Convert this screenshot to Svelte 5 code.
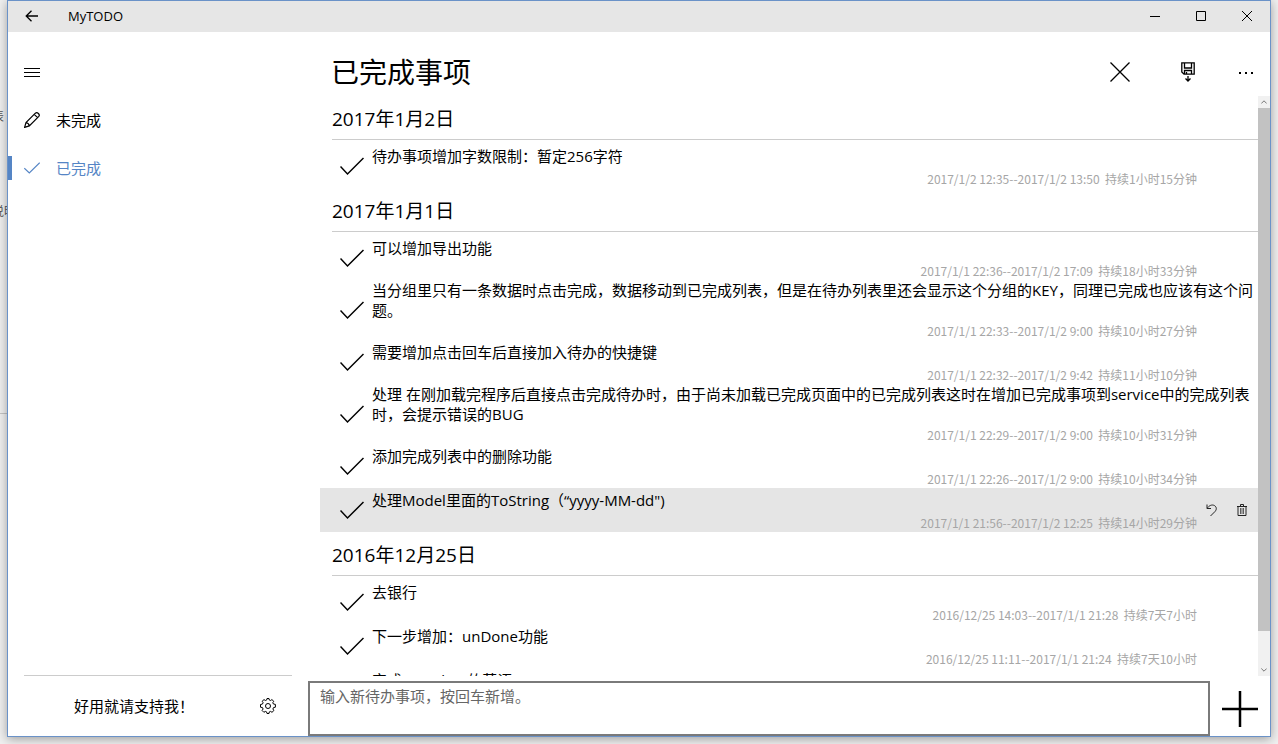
<script>
  let draft = $state('')
  let page = $state('done')

  const pages = [
    { id: 'todo', label: '未完成' },
    { id: 'done', label: '已完成' }
  ]

  // finished items, grouped by the day they were created
  let groups = $state([
    {
      day: '2017年1月2日',
      items: [
        { text: '待办事项增加字数限制：暂定256字符', span: '2017/1/2 12:35--2017/1/2 13:50', lasted: '持续1小时15分钟' }
      ]
    },
    {
      day: '2017年1月1日',
      items: [
        { text: '可以增加导出功能', span: '2017/1/1 22:36--2017/1/2 17:09', lasted: '持续18小时33分钟' },
        { text: '当分组里只有一条数据时点击完成，数据移动到已完成列表，但是在待办列表里还会显示这个分组的KEY，同理已完成也应该有这个问题。', span: '2017/1/1 22:33--2017/1/2 9:00', lasted: '持续10小时27分钟' },
        { text: '需要增加点击回车后直接加入待办的快捷键', span: '2017/1/1 22:32--2017/1/2 9:42', lasted: '持续11小时10分钟' },
        { text: '处理 在刚加载完程序后直接点击完成待办时，由于尚未加载已完成页面中的已完成列表这时在增加已完成事项到service中的完成列表时，会提示错误的BUG', span: '2017/1/1 22:29--2017/1/2 9:00', lasted: '持续10小时31分钟' },
        { text: '添加完成列表中的删除功能', span: '2017/1/1 22:26--2017/1/2 9:00', lasted: '持续10小时34分钟' },
        { text: '处理Model里面的ToString（“yyyy-MM-dd")', span: '2017/1/1 21:56--2017/1/2 12:25', lasted: '持续14小时29分钟', active: true }
      ]
    },
    {
      day: '2016年12月25日',
      items: [
        { text: '去银行', span: '2016/12/25 14:03--2017/1/1 21:28', lasted: '持续7天7小时' },
        { text: '下一步增加：unDone功能', span: '2016/12/25 11:11--2017/1/1 21:24', lasted: '持续7天10小时' },
        { text: '完成complete的英语', span: '2016/12/25 11:10--2017/1/1 21:20', lasted: '持续7天10小时' }
      ]
    }
  ])

  function removeItem(group, item) {
    group.items = group.items.filter(i => i !== item)
  }
</script>

<div class="desktop">
  <div class="behind" aria-hidden="true">
    <span class="scrap first">表</span>
    <span class="scrap second">说明</span>
    <span class="rule"></span>
  </div>

  <div class="window">
    <header class="titlebar">
      <button class="back" aria-label="返回">
        <svg width="14" height="12" viewBox="0 0 14 12"><path d="M6.5 .7L1.2 6l5.3 5.3M1.2 6H13" stroke-width="1.3" /></svg>
      </button>
      <span class="app-name">MyTODO</span>
      <button class="sys" aria-label="最小化">
        <svg width="10" height="10" viewBox="0 0 10 10"><path d="M0 5.5h10" /></svg>
      </button>
      <button class="sys" aria-label="最大化">
        <svg width="10" height="10" viewBox="0 0 10 10"><path d="M.5 .5h9v9h-9z" /></svg>
      </button>
      <button class="sys" aria-label="关闭">
        <svg width="10" height="10" viewBox="0 0 10 10"><path d="M0 0l10 10M10 0L0 10" /></svg>
      </button>
    </header>

    <div class="body">
      <nav class="pane">
        <button class="nav-item" aria-label="菜单">
          <svg width="16" height="16" viewBox="0 0 16 16"><path d="M0 4.5h16M0 8.5h16M0 12.5h16" /></svg>
        </button>
        {#each pages as p (p.id)}
          <button class="nav-item" class:selected={page === p.id} onclick={() => page = p.id}>
            {#if p.id === 'todo'}
              <svg width="16" height="16" viewBox="0 0 16 16"><path d="M.6 15.4L2 10.6 11.4 1.2C13.2-.4 16.4 2.4 14.8 4.4L5.3 13.9zM2 10.6C3.6 10.8 5 12.2 5.3 13.9M10.2 2.400L13.600 5.600" stroke-width="1.2" /></svg>
            {:else}
              <svg width="16" height="16" viewBox="0 0 16 16"><path d="M.3 8.300L5.300 13 15.700 2.700" stroke-width="1.2" /></svg>
            {/if}
            <span>{p.label}</span>
          </button>
        {/each}
        <div class="pane-footer">
          <button class="support">好用就请支持我！</button>
          <button class="settings" aria-label="设置">
            <svg width="16" height="16" viewBox="0 0 16 16">
              <path d="M6.700 2L7 .5h2l.3 1.500 1.300.500L11.900 1.600l1.900 1.700-1 1.400.6 1.300 2 .4v2.800l-1.900.4-.6 1.400 1 1.500-1.900 1.800-1.500-.9-1.200.5L9 15.500H7l-.4-1.600-1.300-.5-1.400.9-1.800-1.800 1-1.500L2.500 9.600.5 9.200V6.500l1.900-.4.700-1.400-1-1.400L4 1.600l1.400.900z" />
              <circle cx="8" cy="8" r="2.500" />
            </svg>
          </button>
        </div>
      </nav>

      <main>
        <div class="head">
          <h1>已完成事项</h1>
          <button class="tool" aria-label="清空">
            <svg width="20" height="20" viewBox="0 0 20 20"><path d="M.5 .5l19 19M19.500 .5L.5 19.500" stroke-width="1.3" /></svg>
          </button>
          <button class="tool" aria-label="导出">
            <svg width="14" height="20" viewBox="0 0 14 20">
              <path d="M.8 .8h12.400v11.400H3L.8 10zM3.500 1v5h7V1M3.500 12V8.500h7V12M5.500 10v2" stroke-width="1.300" />
              <path d="M7 14v5M4.500 16.500L7 19l2.500-2.500" stroke-width="1.300" />
            </svg>
          </button>
          <button class="tool more" aria-label="更多">
            <svg width="16" height="4" viewBox="0 0 16 4"><path d="M1 3h2M7 3h2M13 3h2" stroke-width="2" /></svg>
          </button>
        </div>

        <div class="scroller">
          <div class="list">
            {#each groups as group (group.day)}
              <section>
                <h2>{group.day}</h2>
                <ul>
                  {#each group.items as item (item.text)}
                    <li class:active={item.active}>
                      <svg class="check" width="24" height="24" viewBox="0 0 24 24"><path d="M.5 12.500L7.500 20 23.500 4" stroke-width="1.500" /></svg>
                      <p class="text">{item.text}</p>
                      <p class="time">{item.span}&nbsp; {item.lasted}</p>
                      {#if item.active}
                        <div class="actions">
                          <button aria-label="撤销">
                            <svg width="12" height="12" viewBox="0 0 12 12"><path d="M1 .5V4.500H5M1.200 4.300C3 1.500 6 .2 8.500 1.600 11 3.200 10.600 5.800 9 7.500L4.500 12" /></svg>
                          </button>
                          <button aria-label="删除" onclick={() => removeItem(group, item)}>
                            <svg width="12" height="12" viewBox="0 0 12 12"><path d="M1 2.500h10M4.500 2V.5h3V2M2 2.500v9h8v-9" /><path d="M4.500 4v6M6 4v6M7.500 4v6" stroke-width=".7" /></svg>
                          </button>
                        </div>
                      {/if}
                    </li>
                  {/each}
                </ul>
              </section>
            {/each}
          </div>
          <div class="scrollbar">
            <button aria-label="向上滚动">
              <svg width="6" height="4" viewBox="0 0 6 4"><path d="M.3 3.500L3 .8l2.700 2.700" /></svg>
            </button>
            <div class="track"><div class="thumb"></div></div>
            <button aria-label="向下滚动">
              <svg width="6" height="4" viewBox="0 0 6 4"><path d="M.3 .5L3 3.200 5.700 .5" /></svg>
            </button>
          </div>
        </div>

        <form class="entry" onsubmit={e => e.preventDefault()}>
          <textarea aria-label="新待办事项" placeholder="输入新待办事项，按回车新增。" bind:value={draft}></textarea>
          <button aria-label="新增">
            <svg width="36" height="36" viewBox="0 0 36 36"><path d="M18 0v36M0 18h36" stroke-width="2.500" /></svg>
          </button>
        </form>
      </main>
    </div>
  </div>
</div>

<style>
  :global(body) {
    margin: 0;
  }
  .desktop {
    position: relative;
    box-sizing: border-box;
    height: 100vh;
    padding: 0 7px 7px;
    background: #f0f0f0;
    color: #000;
    font: 15px/20px "Open Sans", "Noto Sans CJK SC", sans-serif;
    overflow: hidden;
  }
  button {
    display: flex;
    align-items: center;
    justify-content: center;
    padding: 0;
    border: none;
    background: none;
    color: inherit;
    font: inherit;
  }
  svg {
    display: block;
    flex: none;
    fill: none;
    stroke: currentColor;
  }
  h1, h2, p, ul {
    margin: 0;
    padding: 0;
    font-weight: 400;
  }

  /* the other window that peeks out on the left */
  .behind {
    position: absolute;
    inset: 0 auto 0 0;
    width: 7px;
    overflow: hidden;
    color: #555;
    font-size: 12px;
  }
  .scrap {
    position: absolute;
    white-space: nowrap;
  }
  .first {
    top: 107px;
    left: -8px;
  }
  .second {
    top: 202px;
    left: -8px;
  }
  .rule {
    position: absolute;
    top: 413px;
    width: 100%;
    border-top: 1px solid #c4c4c4;
  }

  .window {
    position: relative;
    display: flex;
    flex-direction: column;
    box-sizing: border-box;
    height: 100%;
    border: 1px solid #6a92c8;
    background: #fff;
    box-shadow: 0 2px 10px rgba(0, 0, 0, 0.35);
  }
  .titlebar {
    display: flex;
    flex: none;
    height: 31px;
    background: #e6e6e6;
  }
  .titlebar button {
    height: 30px;
  }
  .back {
    width: 48px;
  }
  .app-name {
    flex: 1;
    padding-left: 12px;
    font-size: 13px;
    line-height: 30px;
  }
  .sys {
    width: 46px;
  }
  .body {
    display: flex;
    flex: 1;
    min-height: 0;
  }

  .pane {
    display: flex;
    flex: none;
    flex-direction: column;
    box-sizing: border-box;
    width: 300px;
    padding-top: 16px;
  }
  .nav-item {
    position: relative;
    justify-content: flex-start;
    gap: 16px;
    height: 48px;
    padding-left: 16px;
  }
  .selected {
    color: #5585c5;
  }
  .selected::before {
    content: "";
    position: absolute;
    top: 12px;
    left: 0;
    width: 4px;
    height: 24px;
    background: #5585c5;
  }
  .pane-footer {
    display: flex;
    height: 60px;
    margin: auto 16px 0;
    border-top: 1px solid #ccc;
  }
  .support {
    flex: 1;
  }
  .settings {
    width: 48px;
  }

  main {
    display: flex;
    flex: 1;
    flex-direction: column;
    min-width: 0;
  }
  .head {
    display: flex;
    flex: none;
    align-items: center;
    box-sizing: border-box;
    height: 64px;
    padding: 16px 0 0 23px;
  }
  h1 {
    flex: 1;
    font-size: 28px;
    line-height: 48px;
  }
  .tool {
    width: 68px;
    height: 48px;
  }
  .more {
    width: 48px;
  }

  .scroller {
    display: flex;
    flex: 1;
    min-height: 0;
  }
  .list {
    flex: 1;
    min-width: 0;
    padding-left: 12px;
    overflow: hidden;
  }
  h2 {
    box-sizing: border-box;
    height: 44px;
    margin: 0 0 4px 12px;
    border-bottom: 1px solid #ccc;
    font-size: 19px;
    line-height: 46px;
  }
  ul {
    list-style: none;
  }
  li {
    display: grid;
    grid-template-columns: 24px 1fr 61px;
    padding-left: 20px;
  }
  li.active {
    background: #e5e5e5;
  }
  .check {
    grid-row: 1 / 3;
    align-self: center;
  }
  .text {
    display: flex;
    grid-row: 1;
    grid-column: 2 / 4;
    align-items: center;
    min-height: 24px;
    padding-left: 8px;
  }
  .time {
    grid-row: 2;
    grid-column: 2;
    height: 20px;
    color: #a6a6a6;
    font-family: "Noto Sans CJK SC", sans-serif;
    font-size: 12px;
    line-height: 22px;
    text-align: right;
  }
  .actions {
    display: flex;
    grid-row: 1 / 3;
    grid-column: 3;
    justify-content: flex-end;
    padding-right: 1px;
    color: #222;
  }
  .actions button {
    width: 32px;
  }

  .scrollbar {
    display: flex;
    flex-direction: column;
    width: 12px;
    background: #f1f1f1;
    color: #777;
  }
  .scrollbar button {
    height: 12px;
  }
  .track {
    flex: 1;
  }
  .thumb {
    height: 94%;
    background: #c2c2c2;
  }

  .entry {
    display: flex;
    flex: none;
    padding-top: 5px;
  }
  textarea {
    flex: 1;
    box-sizing: border-box;
    height: 55px;
    margin: 0;
    padding: 3px 10px;
    border: 2px solid #7a7a7a;
    border-radius: 0;
    outline: none;
    background: #fff;
    font: inherit;
    resize: none;
  }
  textarea::placeholder {
    color: #666;
  }
  .entry button {
    width: 60px;
  }
</style>
